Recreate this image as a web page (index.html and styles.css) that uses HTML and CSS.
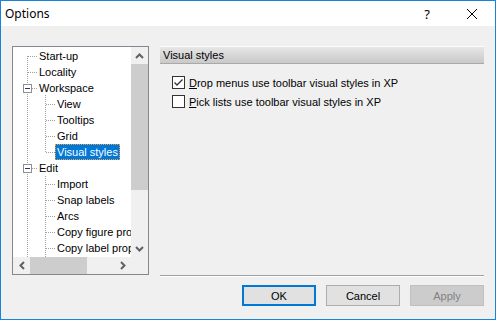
FILE: index.html
```html
<!DOCTYPE html>
<html lang="en">
<head>
    <meta charset="UTF-8">
    <title>Options</title>
    <link rel="stylesheet" href="styles.css">
</head>
<body>
    <div class="window">
        <div class="titlebar">
            <span class="title">Options</span>
            <span class="help">?</span>
            <svg class="close" width="12" height="12" viewBox="0 0 12 12"><path d="M1 1L11 11M11 1L1 11" stroke="#000" stroke-width="1"/></svg>
        </div>
        <div class="content">
            <div class="tree">
                <div class="tree-view">
                    <svg class="tree-lines" width="118" height="210">
                        <g stroke="#a0a0a0" stroke-dasharray="1 1" fill="none">
                            <path d="M14.5 9V210"/>
                            <path d="M15 9.5H24M15 25.5H24M19 41.5H24M19 121.5H24"/>
                            <path d="M32.5 48V105M32.5 129V210"/>
                            <path d="M33 57.5H42M33 73.5H42M33 89.5H42M33 105.5H42M33 137.5H42M33 153.5H42M33 169.5H42M33 185.5H42M33 201.5H42"/>
                        </g>
                        <g>
                            <rect x="10.5" y="37.5" width="8" height="8" fill="#fff" stroke="#8e8f8f"/>
                            <path d="M12 41.5H17" stroke="#1e3287"/>
                            <rect x="10.5" y="117.5" width="8" height="8" fill="#fff" stroke="#8e8f8f"/>
                            <path d="M12 121.5H17" stroke="#1e3287"/>
                        </g>
                    </svg>
                    <div class="node lvl1"><span>Start-up</span></div>
                    <div class="node lvl1"><span>Locality</span></div>
                    <div class="node lvl1"><span>Workspace</span></div>
                    <div class="node lvl2"><span>View</span></div>
                    <div class="node lvl2"><span>Tooltips</span></div>
                    <div class="node lvl2"><span>Grid</span></div>
                    <div class="node lvl2"><span class="selected">Visual styles</span></div>
                    <div class="node lvl1"><span>Edit</span></div>
                    <div class="node lvl2"><span>Import</span></div>
                    <div class="node lvl2"><span>Snap labels</span></div>
                    <div class="node lvl2"><span>Arcs</span></div>
                    <div class="node lvl2"><span>Copy figure properties</span></div>
                    <div class="node lvl2"><span>Copy label properties</span></div>
                </div>
                <div class="vscroll">
                    <div class="arrow">
                        <svg width="9" height="6" viewBox="0 0 9 6"><path d="M1 5L4.5 1.5L8 5" stroke="#606060" stroke-width="2" fill="none"/></svg>
                    </div>
                    <div class="vthumb"></div>
                    <div class="vtrack"></div>
                    <div class="arrow">
                        <svg width="9" height="6" viewBox="0 0 9 6"><path d="M1 1L4.5 4.5L8 1" stroke="#606060" stroke-width="2" fill="none"/></svg>
                    </div>
                </div>
                <div class="hscroll">
                    <div class="arrow">
                        <svg width="6" height="9" viewBox="0 0 6 9"><path d="M5 1L1.5 4.5L5 8" stroke="#606060" stroke-width="2" fill="none"/></svg>
                    </div>
                    <div class="hthumb"></div>
                    <div class="htrack"></div>
                    <div class="arrow">
                        <svg width="6" height="9" viewBox="0 0 6 9"><path d="M1 1L4.5 4.5L1 8" stroke="#606060" stroke-width="2" fill="none"/></svg>
                    </div>
                </div>
                <div class="corner"></div>
            </div>
            <div class="pane">
                <div class="pane-header">Visual styles</div>
                <div class="options">
                    <label class="option">
                        <span class="check checked">
                            <svg width="11" height="11" viewBox="0 0 11 11"><path d="M1.5 5.5L4 8L9.5 2.5" stroke="#333" stroke-width="1.3" fill="none"/></svg>
                        </span>
                        <span><u>D</u>rop menus use toolbar visual styles in XP</span>
                    </label>
                    <label class="option">
                        <span class="check"></span>
                        <span><u>P</u>ick lists use toolbar visual styles in XP</span>
                    </label>
                </div>
                <div class="separator"></div>
                <div class="buttons">
                    <button class="btn default">OK</button>
                    <button class="btn">Cancel</button>
                    <button class="btn" disabled>Apply</button>
                </div>
            </div>
        </div>
    </div>
</body>
</html>
```
FILE: styles.css
```css
body {
    margin: 0;
    font-family: 'Liberation Sans', Arial, sans-serif;
    font-size: 11px;
    color: #000;
}
.window {
    width: 496px;
    height: 320px;
    box-sizing: border-box;
    border: 1px solid #1883d7;
    background: #f0f0f0;
    display: flex;
    flex-direction: column;
}
.titlebar {
    height: 25px;
    background: #fff;
    display: flex;
    align-items: center;
    font-family: 'Noto Sans', sans-serif;
    font-size: 12px;
}
.title {
    padding-left: 4px;
    flex: 1;
}
.help {
    margin-right: 36px;
    font-size: 13px;
}
.close {
    margin-right: 17px;
}
.content {
    flex: 1;
    display: flex;
    gap: 11px;
    padding: 20px 11px 0 11px;
}
.tree {
    width: 137px;
    height: 229px;
    box-sizing: border-box;
    border: 1px solid #828790;
    display: grid;
    grid-template-columns: 118px 17px;
    grid-template-rows: 210px 17px;
}
.tree-view {
    position: relative;
    background: #fff;
    overflow: hidden;
    padding-top: 1px;
    white-space: nowrap;
}
.tree-lines {
    position: absolute;
    left: 0;
    top: 0;
}
.node {
    position: relative;
    height: 16px;
    line-height: 16px;
}
.node span {
    padding: 0 2px;
    display: inline-block;
    height: 16px;
    box-sizing: border-box;
}
.lvl1 {
    padding-left: 24px;
}
.lvl2 {
    padding-left: 42px;
}
.node .selected {
    background: #0078d7;
    color: #fff;
    outline: 1px dotted #ff9a3c;
    outline-offset: -1px;
}
.vscroll {
    display: flex;
    flex-direction: column;
    background: #f0f0f0;
}
.vscroll .arrow {
    height: 17px;
    display: flex;
    align-items: center;
    justify-content: center;
}
.vthumb {
    height: 126px;
    background: #cdcdcd;
}
.vtrack {
    flex: 1;
}
.hscroll {
    display: flex;
    background: #f0f0f0;
}
.hscroll .arrow {
    width: 17px;
    display: flex;
    align-items: center;
    justify-content: center;
}
.hthumb {
    width: 57px;
    background: #cdcdcd;
}
.htrack {
    flex: 1;
}
.corner {
    background: #f0f0f0;
}
.pane {
    width: 324px;
    height: 260px;
    display: flex;
    flex-direction: column;
}
.pane-header {
    height: 18px;
    box-sizing: border-box;
    padding-left: 3px;
    line-height: 17px;
    background: linear-gradient(#e6e6e6, #c9c9c9);
    border-top: 1px solid #fdfdfd;
    border-bottom: 1px solid #a9a9a9;
}
.options {
    padding: 12px 0 0 12px;
    display: flex;
    flex-direction: column;
    gap: 6px;
}
.option {
    display: flex;
    align-items: center;
    height: 13px;
    gap: 4px;
}
.check {
    width: 13px;
    height: 13px;
    box-sizing: border-box;
    border: 1px solid #333;
    background: #fff;
    display: flex;
    align-items: center;
    justify-content: center;
}
.separator {
    margin-top: auto;
    height: 1px;
    background: #a0a0a0;
    border-bottom: 1px solid #fff;
}
.buttons {
    margin-top: 8px;
    display: flex;
    justify-content: flex-end;
    gap: 10px;
}
.btn {
    width: 74px;
    height: 21px;
    box-sizing: border-box;
    border: 1px solid #adadad;
    background: #e1e1e1;
    font-family: 'Liberation Sans', Arial, sans-serif;
    font-size: 11px;
    color: #000;
    padding: 0;
}
.btn.default {
    border: 2px solid #0078d7;
}
.btn:disabled {
    background: #cccccc;
    border-color: #bfbfbf;
    color: #838383;
}
```
